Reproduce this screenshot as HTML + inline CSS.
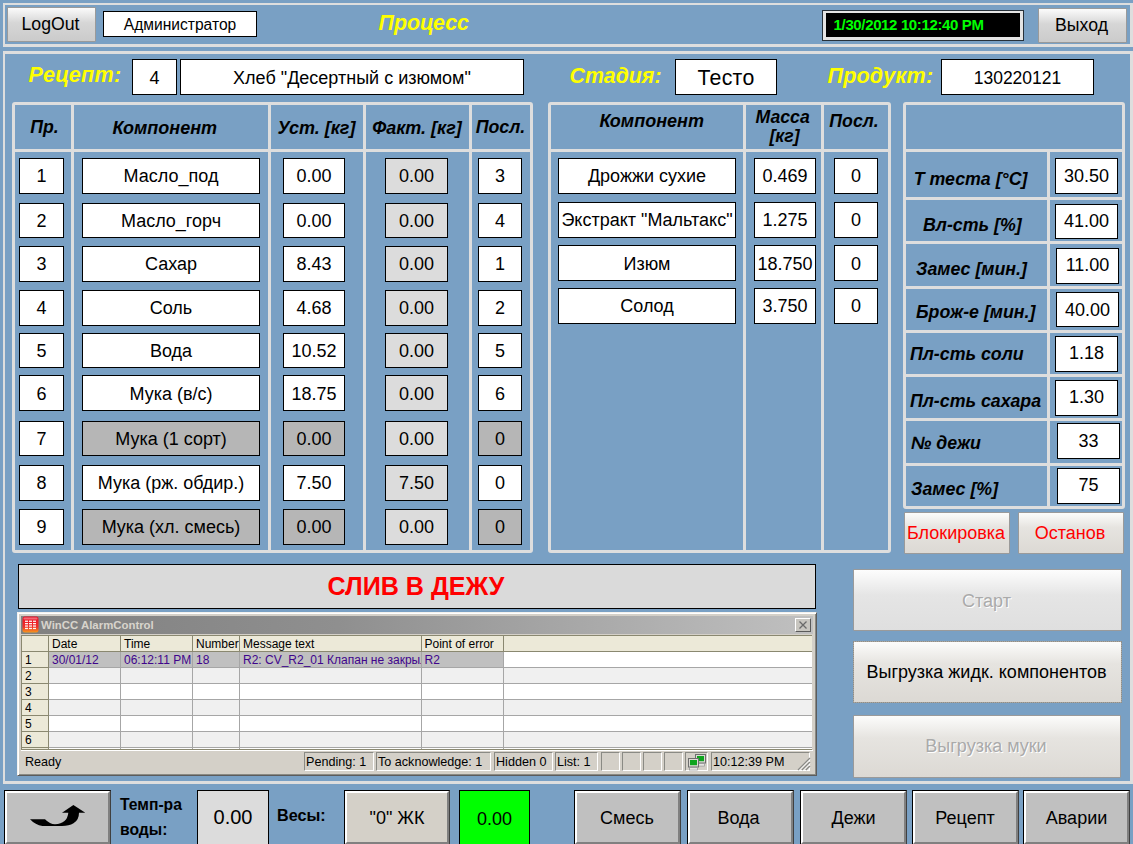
<!DOCTYPE html>
<html><head><meta charset="utf-8"><title>Процесс</title>
<style>
html,body{margin:0;padding:0;}
body{width:1133px;height:844px;overflow:hidden;background:#79a0c4;position:relative;font-family:"Liberation Sans",sans-serif;}
#root{position:absolute;left:0;top:0;width:1133px;height:844px;overflow:hidden;background:#79a0c4;}
.r{position:absolute;}
.t{position:absolute;line-height:1;white-space:pre;color:#000;}
.bx{position:absolute;box-sizing:border-box;border:1px solid #000;text-align:center;white-space:pre;overflow:hidden;}
.gb{position:absolute;box-sizing:border-box;border:1px solid #9a9a9a;text-align:center;white-space:pre;border-radius:1px;text-indent:-2px;}
.gb.dis{text-shadow:1px 1px 0 #fff;}
.cb{position:absolute;box-sizing:border-box;border:1px solid #000;border-right-color:#404040;}
.ah{position:absolute;top:0;height:16px;box-sizing:border-box;border-right:1px solid #8a8870;font-size:12px;line-height:17px;padding-left:3px;white-space:pre;overflow:hidden;color:#000;}
.arh{position:absolute;left:0;width:27px;height:16px;box-sizing:border-box;background:#ece9d8;border-right:1px solid #8a8870;border-bottom:1px solid #8a8870;font-size:12px;line-height:17px;padding-left:3px;color:#000;}
.ac{position:absolute;height:16px;box-sizing:border-box;border-right:1px solid #a6a6a6;border-bottom:1px solid #a6a6a6;font-size:12px;line-height:17px;padding-left:3px;white-space:pre;overflow:hidden;color:#40058c;}
.ap{position:absolute;top:752px;height:19px;box-sizing:border-box;border:1px solid;border-color:#8a8a84 #fff #fff #8a8a84;font-size:12.6px;line-height:18.5px;padding-left:1px;white-space:pre;overflow:hidden;color:#000;}
.cbi{position:absolute;left:0;top:0;right:0;bottom:0;border-left:2px solid #fff;border-top:2px solid #fff;border-right:2px solid #808080;border-bottom:2px solid #808080;text-align:center;white-space:pre;}
</style></head><body><div id="root">
<div class="r" style="left:3px;top:3px;width:1130px;height:44px;box-sizing:border-box;border:solid #dedede;border-width:2px 3px 3px 2px;"></div>
<div class="gb" style="left:7px;top:7px;width:89px;height:35px;line-height:33px;font-size:17.7px;color:#000;background:linear-gradient(#fbfbfb 0%,#d6d6d6 45%,#cbcbcb 100%);">LogOut</div>
<div class="bx" style="left:103px;top:11px;width:154px;height:26px;line-height:26px;background:#fff;font-size:15.6px;color:#000;">Администратор</div>
<div class="t" style="left:378.5px;top:12.58px;font-size:21.4px;font-weight:bold;font-style:italic;color:#ffff00;">Процесс</div>
<div class="r" style="left:822px;top:10px;width:202px;height:31px;box-sizing:border-box;border:1px solid #27313a;background:#e4e4e4;"><div style="position:absolute;left:3px;top:2px;right:3px;bottom:3px;background:#000;"></div></div>
<div class="t" style="left:833.6px;top:17.00px;font-size:15px;font-weight:bold;color:#00ff00;letter-spacing:-0.36px;">1/30/2012 10:12:40 PM</div>
<div class="gb" style="left:1038px;top:8px;width:89px;height:35px;line-height:33px;font-size:17.7px;color:#000;background:linear-gradient(#fbfbfb 0%,#d6d6d6 45%,#cbcbcb 100%);">Выход</div>
<div class="r" style="left:3px;top:51px;width:1130px;height:733px;box-sizing:border-box;border:solid #dedede;border-width:3px 3px 3px 2px;"></div>
<div class="t" style="left:28.5px;top:64.42px;font-size:21.6px;font-weight:bold;font-style:italic;color:#ffff00;letter-spacing:0.3px;">Рецепт:</div>
<div class="bx" style="left:132px;top:59px;width:45px;height:36px;line-height:36px;background:#fff;font-size:18px;color:#000;">4</div>
<div class="bx" style="left:180px;top:59px;width:344px;height:36px;line-height:36px;background:#fff;font-size:18px;color:#000;">Хлеб "Десертный с изюмом"</div>
<div class="t" style="left:569.5px;top:65.87px;font-size:21.3px;font-weight:bold;font-style:italic;color:#ffff00;">Стадия:</div>
<div class="bx" style="left:675px;top:59px;width:102px;height:36px;line-height:36px;background:#fff;font-size:21.3px;color:#000;letter-spacing:0.3px;">Тесто</div>
<div class="t" style="left:827.5px;top:65.32px;font-size:21.6px;font-weight:bold;font-style:italic;color:#ffff00;letter-spacing:0.15px;">Продукт:</div>
<div class="bx" style="left:941px;top:59px;width:153px;height:36px;line-height:36px;background:#fff;font-size:17.5px;color:#000;">130220121</div>
<div class="r" style="left:12px;top:102px;width:521px;height:451px;border:3px solid #dedede;box-sizing:border-box;border-radius:3px;"></div>
<div class="r" style="left:71px;top:104px;width:3px;height:447px;background:#dedede;"></div>
<div class="r" style="left:268px;top:104px;width:3px;height:447px;background:#dedede;"></div>
<div class="r" style="left:363px;top:104px;width:3px;height:447px;background:#dedede;"></div>
<div class="r" style="left:469px;top:104px;width:3px;height:447px;background:#dedede;"></div>
<div class="r" style="left:14px;top:149px;width:517px;height:3px;background:#dedede;"></div>
<div class="t" style="left:-155.5px;width:400px;text-align:center;top:119.42px;font-size:17.7px;font-weight:bold;font-style:italic;">Пр.</div>
<div class="t" style="left:-35.19999999999999px;width:400px;text-align:center;top:119.16px;font-size:18px;font-weight:bold;font-style:italic;">Компонент</div>
<div class="t" style="left:116.5px;width:400px;text-align:center;top:119.16px;font-size:18px;font-weight:bold;font-style:italic;">Уст. [кг]</div>
<div class="t" style="left:217px;width:400px;text-align:center;top:119.16px;font-size:18px;font-weight:bold;font-style:italic;">Факт. [кг]</div>
<div class="t" style="left:300.5px;width:400px;text-align:center;top:119.33px;font-size:17.8px;font-weight:bold;font-style:italic;">Посл.</div>
<div class="bx" style="left:19px;top:158px;width:45px;height:36px;line-height:34px;background:#fff;font-size:18px;color:#000;">1</div>
<div class="bx" style="left:82px;top:158px;width:178px;height:36px;line-height:34px;background:#fff;font-size:18px;color:#000;">Масло_под</div>
<div class="bx" style="left:283px;top:158px;width:62px;height:36px;line-height:34px;background:#fff;font-size:18px;color:#000;">0.00</div>
<div class="bx" style="left:385px;top:158px;width:63px;height:36px;line-height:34px;background:#dcdcdc;font-size:18px;color:#000;">0.00</div>
<div class="bx" style="left:478px;top:158px;width:44px;height:36px;line-height:34px;background:#fff;font-size:18px;color:#000;">3</div>
<div class="bx" style="left:19px;top:203px;width:45px;height:35px;line-height:35px;background:#fff;font-size:18px;color:#000;">2</div>
<div class="bx" style="left:82px;top:203px;width:178px;height:35px;line-height:35px;background:#fff;font-size:18px;color:#000;">Масло_горч</div>
<div class="bx" style="left:283px;top:203px;width:62px;height:35px;line-height:35px;background:#fff;font-size:18px;color:#000;">0.00</div>
<div class="bx" style="left:385px;top:203px;width:63px;height:35px;line-height:35px;background:#dcdcdc;font-size:18px;color:#000;">0.00</div>
<div class="bx" style="left:478px;top:203px;width:44px;height:35px;line-height:35px;background:#fff;font-size:18px;color:#000;">4</div>
<div class="bx" style="left:19px;top:246px;width:45px;height:36px;line-height:34px;background:#fff;font-size:18px;color:#000;">3</div>
<div class="bx" style="left:82px;top:246px;width:178px;height:36px;line-height:34px;background:#fff;font-size:18px;color:#000;">Сахар</div>
<div class="bx" style="left:283px;top:246px;width:62px;height:36px;line-height:34px;background:#fff;font-size:18px;color:#000;">8.43</div>
<div class="bx" style="left:385px;top:246px;width:63px;height:36px;line-height:34px;background:#dcdcdc;font-size:18px;color:#000;">0.00</div>
<div class="bx" style="left:478px;top:246px;width:44px;height:36px;line-height:34px;background:#fff;font-size:18px;color:#000;">1</div>
<div class="bx" style="left:19px;top:290px;width:45px;height:36px;line-height:34px;background:#fff;font-size:18px;color:#000;">4</div>
<div class="bx" style="left:82px;top:290px;width:178px;height:36px;line-height:34px;background:#fff;font-size:18px;color:#000;">Соль</div>
<div class="bx" style="left:283px;top:290px;width:62px;height:36px;line-height:34px;background:#fff;font-size:18px;color:#000;">4.68</div>
<div class="bx" style="left:385px;top:290px;width:63px;height:36px;line-height:34px;background:#dcdcdc;font-size:18px;color:#000;">0.00</div>
<div class="bx" style="left:478px;top:290px;width:44px;height:36px;line-height:34px;background:#fff;font-size:18px;color:#000;">2</div>
<div class="bx" style="left:19px;top:333px;width:45px;height:35px;line-height:35px;background:#fff;font-size:18px;color:#000;">5</div>
<div class="bx" style="left:82px;top:333px;width:178px;height:35px;line-height:35px;background:#fff;font-size:18px;color:#000;">Вода</div>
<div class="bx" style="left:283px;top:333px;width:62px;height:35px;line-height:35px;background:#fff;font-size:18px;color:#000;">10.52</div>
<div class="bx" style="left:385px;top:333px;width:63px;height:35px;line-height:35px;background:#dcdcdc;font-size:18px;color:#000;">0.00</div>
<div class="bx" style="left:478px;top:333px;width:44px;height:35px;line-height:35px;background:#fff;font-size:18px;color:#000;">5</div>
<div class="bx" style="left:19px;top:375px;width:45px;height:36px;line-height:36px;background:#fff;font-size:18px;color:#000;">6</div>
<div class="bx" style="left:82px;top:375px;width:178px;height:36px;line-height:36px;background:#fff;font-size:18px;color:#000;">Мука (в/с)</div>
<div class="bx" style="left:283px;top:375px;width:62px;height:36px;line-height:36px;background:#fff;font-size:18px;color:#000;">18.75</div>
<div class="bx" style="left:385px;top:375px;width:63px;height:36px;line-height:36px;background:#dcdcdc;font-size:18px;color:#000;">0.00</div>
<div class="bx" style="left:478px;top:375px;width:44px;height:36px;line-height:36px;background:#fff;font-size:18px;color:#000;">6</div>
<div class="bx" style="left:19px;top:421px;width:45px;height:35px;line-height:35px;background:#fff;font-size:18px;color:#000;">7</div>
<div class="bx" style="left:82px;top:421px;width:178px;height:35px;line-height:35px;background:#b6b6b6;font-size:18px;color:#000;">Мука (1 сорт)</div>
<div class="bx" style="left:283px;top:421px;width:62px;height:35px;line-height:35px;background:#b6b6b6;font-size:18px;color:#000;">0.00</div>
<div class="bx" style="left:385px;top:421px;width:63px;height:35px;line-height:35px;background:#dcdcdc;font-size:18px;color:#000;">0.00</div>
<div class="bx" style="left:478px;top:421px;width:44px;height:35px;line-height:35px;background:#b6b6b6;font-size:18px;color:#000;">0</div>
<div class="bx" style="left:19px;top:465px;width:45px;height:36px;line-height:34px;background:#fff;font-size:18px;color:#000;">8</div>
<div class="bx" style="left:82px;top:465px;width:178px;height:36px;line-height:34px;background:#fff;font-size:18px;color:#000;">Мука (рж. обдир.)</div>
<div class="bx" style="left:283px;top:465px;width:62px;height:36px;line-height:34px;background:#fff;font-size:18px;color:#000;">7.50</div>
<div class="bx" style="left:385px;top:465px;width:63px;height:36px;line-height:34px;background:#dcdcdc;font-size:18px;color:#000;">7.50</div>
<div class="bx" style="left:478px;top:465px;width:44px;height:36px;line-height:34px;background:#fff;font-size:18px;color:#000;">0</div>
<div class="bx" style="left:19px;top:509px;width:45px;height:36px;line-height:34px;background:#fff;font-size:18px;color:#000;">9</div>
<div class="bx" style="left:82px;top:509px;width:178px;height:36px;line-height:34px;background:#b6b6b6;font-size:18px;color:#000;">Мука (хл. смесь)</div>
<div class="bx" style="left:283px;top:509px;width:62px;height:36px;line-height:34px;background:#b6b6b6;font-size:18px;color:#000;">0.00</div>
<div class="bx" style="left:385px;top:509px;width:63px;height:36px;line-height:34px;background:#dcdcdc;font-size:18px;color:#000;">0.00</div>
<div class="bx" style="left:478px;top:509px;width:44px;height:36px;line-height:34px;background:#b6b6b6;font-size:18px;color:#000;">0</div>
<div class="r" style="left:548px;top:102px;width:343px;height:451px;border:3px solid #dedede;box-sizing:border-box;border-radius:3px;"></div>
<div class="r" style="left:743px;top:104px;width:3px;height:447px;background:#dedede;"></div>
<div class="r" style="left:821px;top:104px;width:3px;height:447px;background:#dedede;"></div>
<div class="r" style="left:550px;top:149px;width:339px;height:3px;background:#dedede;"></div>
<div class="t" style="left:451.70000000000005px;width:400px;text-align:center;top:112.06px;font-size:18px;font-weight:bold;font-style:italic;">Компонент</div>
<div class="t" style="left:582.6px;width:400px;text-align:center;top:109.32px;font-size:17.7px;font-weight:bold;font-style:italic;">Масса</div>
<div class="t" style="left:584.5px;width:400px;text-align:center;top:127.72px;font-size:17.7px;font-weight:bold;font-style:italic;">[кг]</div>
<div class="t" style="left:654px;width:400px;text-align:center;top:112.92px;font-size:17.7px;font-weight:bold;font-style:italic;">Посл.</div>
<div class="bx" style="left:558px;top:158px;width:178px;height:36px;line-height:34px;background:#fff;font-size:18px;color:#000;">Дрожжи сухие</div>
<div class="bx" style="left:754px;top:158px;width:62px;height:36px;line-height:34px;background:#fff;font-size:18px;color:#000;">0.469</div>
<div class="bx" style="left:834px;top:158px;width:44px;height:36px;line-height:34px;background:#fff;font-size:18px;color:#000;">0</div>
<div class="bx" style="left:558px;top:202px;width:178px;height:36px;line-height:34px;background:#fff;font-size:18px;color:#000;">Экстракт "Мальтакс"</div>
<div class="bx" style="left:754px;top:202px;width:62px;height:36px;line-height:34px;background:#fff;font-size:18px;color:#000;">1.275</div>
<div class="bx" style="left:834px;top:202px;width:44px;height:36px;line-height:34px;background:#fff;font-size:18px;color:#000;">0</div>
<div class="bx" style="left:558px;top:245px;width:178px;height:36px;line-height:36px;background:#fff;font-size:18px;color:#000;">Изюм</div>
<div class="bx" style="left:754px;top:245px;width:62px;height:36px;line-height:36px;background:#fff;font-size:18px;color:#000;">18.750</div>
<div class="bx" style="left:834px;top:245px;width:44px;height:36px;line-height:36px;background:#fff;font-size:18px;color:#000;">0</div>
<div class="bx" style="left:558px;top:288px;width:178px;height:36px;line-height:34px;background:#fff;font-size:18px;color:#000;">Солод</div>
<div class="bx" style="left:754px;top:288px;width:62px;height:36px;line-height:34px;background:#fff;font-size:18px;color:#000;">3.750</div>
<div class="bx" style="left:834px;top:288px;width:44px;height:36px;line-height:34px;background:#fff;font-size:18px;color:#000;">0</div>
<div class="r" style="left:903px;top:102px;width:222px;height:407px;border:3px solid #dedede;box-sizing:border-box;border-radius:3px;"></div>
<div class="r" style="left:1047px;top:150px;width:3px;height:357px;background:#dedede;"></div>
<div class="r" style="left:905px;top:149px;width:218px;height:3px;background:#dedede;"></div>
<div class="r" style="left:905px;top:197px;width:218px;height:3px;background:#dedede;"></div>
<div class="r" style="left:905px;top:241px;width:218px;height:3px;background:#dedede;"></div>
<div class="r" style="left:905px;top:286px;width:218px;height:3px;background:#dedede;"></div>
<div class="r" style="left:905px;top:330px;width:218px;height:3px;background:#dedede;"></div>
<div class="r" style="left:905px;top:374px;width:218px;height:3px;background:#dedede;"></div>
<div class="r" style="left:905px;top:418px;width:218px;height:3px;background:#dedede;"></div>
<div class="r" style="left:905px;top:463px;width:218px;height:3px;background:#dedede;"></div>
<div class="t" style="left:913.7px;top:171.23px;font-size:17.8px;font-weight:bold;font-style:italic;">Т теста [°C]</div>
<div class="bx" style="left:1055px;top:158px;width:63px;height:36px;line-height:34px;background:#fff;font-size:18px;color:#000;">30.50</div>
<div class="t" style="left:923px;top:217.23px;font-size:17.8px;font-weight:bold;font-style:italic;">Вл-сть [%]</div>
<div class="bx" style="left:1055px;top:204px;width:63px;height:35px;line-height:33px;background:#fff;font-size:18px;color:#000;">41.00</div>
<div class="t" style="left:916px;top:261.23px;font-size:17.8px;font-weight:bold;font-style:italic;">Замес [мин.]</div>
<div class="bx" style="left:1056px;top:248px;width:63px;height:36px;line-height:33.0px;background:#fff;font-size:18px;color:#000;">11.00</div>
<div class="t" style="left:916px;top:304.23px;font-size:17.8px;font-weight:bold;font-style:italic;">Брож-е [мин.]</div>
<div class="bx" style="left:1056px;top:292px;width:63px;height:35px;line-height:34.0px;background:#fff;font-size:18px;color:#000;">40.00</div>
<div class="t" style="left:910px;top:345.83px;font-size:17.8px;font-weight:bold;font-style:italic;">Пл-сть соли</div>
<div class="bx" style="left:1055px;top:336px;width:63px;height:36px;line-height:32px;background:#fff;font-size:18px;color:#000;">1.18</div>
<div class="t" style="left:910px;top:392.73px;font-size:17.8px;font-weight:bold;font-style:italic;">Пл-сть сахара</div>
<div class="bx" style="left:1055px;top:380px;width:63px;height:36px;line-height:33.0px;background:#fff;font-size:18px;color:#000;">1.30</div>
<div class="t" style="left:911px;top:435.23px;font-size:17.8px;font-weight:bold;font-style:italic;">№ дежи</div>
<div class="bx" style="left:1057px;top:423px;width:63px;height:36px;line-height:34px;background:#fff;font-size:18px;color:#000;">33</div>
<div class="t" style="left:911px;top:480.93px;font-size:17.8px;font-weight:bold;font-style:italic;">Замес [%]</div>
<div class="bx" style="left:1057px;top:468px;width:63px;height:36px;line-height:32px;background:#fff;font-size:18px;color:#000;">75</div>
<div class="gb" style="left:904px;top:512px;width:106px;height:42px;line-height:40px;font-size:18px;color:#ff0000;background:linear-gradient(#fcfcfb 0%,#e6e4e0 36%,#dcd9d4 100%);">Блокировка</div>
<div class="gb" style="left:1018px;top:512px;width:106px;height:42px;line-height:40px;font-size:18px;color:#ff0000;background:linear-gradient(#fcfcfb 0%,#e6e4e0 36%,#dcd9d4 100%);">Останов</div>
<div class="gb dis" style="left:853px;top:569px;width:269px;height:62px;line-height:60px;font-size:18px;color:#aaaaaa;background:linear-gradient(#fdfdfd 0%,#e5e5e5 42%,#dfdfdf 100%);padding-top:1px;">Старт</div>
<div class="gb" style="left:853px;top:641px;width:269px;height:62px;line-height:60px;font-size:18px;color:#000;background:linear-gradient(#fcfcfb 0%,#e6e4e0 36%,#dcd9d4 100%);border:1px solid #a9a7a1;outline:1px dotted #8f8d88;outline-offset:-1px;">Выгрузка жидк. компонентов</div>
<div class="gb dis" style="left:853px;top:715px;width:268px;height:63px;line-height:61px;font-size:18px;color:#aaaaaa;background:linear-gradient(#fcfcfb 0%,#e6e4e0 36%,#dcd9d4 100%);">Выгрузка муки</div>
<div class="bx" style="left:18px;top:564px;width:798px;height:45px;line-height:45px;background:#dadada;font-size:25.1px;color:#ff0000;font-weight:bold;line-height:43.5px;text-indent:-2px;">СЛИВ В ДЕЖУ</div>
<div class="r" style="left:17px;top:612px;width:800px;height:164px;box-sizing:border-box;background:#d4d0c8;border:1px solid;border-color:#f4f2ee #5c5c5c #5c5c5c #f4f2ee;box-shadow:inset 1px 1px 0 #fff, inset -1px -1px 0 #8a8a84;"></div>
<div class="r" style="left:21px;top:616px;width:792px;height:18px;background:linear-gradient(90deg,#808080 0%,#8f8f8f 40%,#c0c0c0 100%);"></div>
<svg class="r" style="left:22px;top:616px" width="17" height="17" viewBox="0 0 17 17"><defs><linearGradient id="ig" x1="0" y1="0" x2="0" y2="1"><stop offset="0" stop-color="#e8132a"/><stop offset="0.65" stop-color="#f0302a"/><stop offset="1" stop-color="#f59a1e"/></linearGradient></defs><rect x="0.5" y="0.5" width="16" height="16" rx="2.2" fill="url(#ig)"/><rect x="1.5" y="1.5" width="14" height="2" rx="1" fill="#f58a96" opacity=".7"/>
<g fill="#fff" opacity=".95"><rect x="3" y="4.6" width="3" height="1.3"/><rect x="7" y="4.6" width="3" height="1.3"/><rect x="11" y="4.6" width="3" height="1.3"/><rect x="3" y="7" width="3" height="1.3"/><rect x="7" y="7" width="3" height="1.3"/><rect x="11" y="7" width="3" height="1.3"/><rect x="3" y="9.4" width="3" height="1.3"/><rect x="7" y="9.4" width="3" height="1.3"/><rect x="11" y="9.4" width="3" height="1.3"/><rect x="3" y="11.8" width="3" height="1.3"/><rect x="7" y="11.8" width="3" height="1.3"/><rect x="11" y="11.8" width="3" height="1.3"/></g></svg>
<div class="t" style="left:41px;top:620.2px;font-size:11.4px;font-weight:bold;color:#d8d4cc;">WinCC AlarmControl</div>
<div class="r" style="left:795px;top:618px;width:16px;height:14px;box-sizing:border-box;background:#c8c6c0;border:1px solid;border-color:#fff #5a5a5a #5a5a5a #fff;"><svg width="14" height="12" viewBox="0 0 14 12" style="position:absolute;left:0;top:0"><path d="M3.5 2.5 L10.5 9.5 M10.5 2.5 L3.5 9.5" stroke="#6a6a6a" stroke-width="1.3" fill="none"/></svg></div>
<div class="r" style="left:21px;top:635px;width:791px;height:115px;background:#fff;overflow:hidden;border-top:1px solid #8a8870;border-left:1px solid #8a8870;box-sizing:border-box;">
<div class="r" style="left:0;top:0;width:791px;height:16px;background:#ece9d8;border-bottom:1px solid #8a8870;box-sizing:border-box;"></div>
<div class="ah" style="left:0px;width:27px;"></div>
<div class="ah" style="left:27px;width:72px;">Date</div>
<div class="ah" style="left:99px;width:72px;">Time</div>
<div class="ah" style="left:171px;width:47px;">Number</div>
<div class="ah" style="left:218px;width:181.5px;">Message text</div>
<div class="ah" style="left:399.5px;width:82.0px;">Point of error</div>
<div class="ah" style="left:481.5px;width:309.5px;"></div>
<div class="arh" style="top:16px;">1</div>
<div class="ac" style="left:27px;top:16px;width:72px;background:#c0c0c0;">30/01/12</div>
<div class="ac" style="left:99px;top:16px;width:72px;background:#c0c0c0;">06:12:11 PM</div>
<div class="ac" style="left:171px;top:16px;width:47px;background:#c0c0c0;">18</div>
<div class="ac" style="left:218px;top:16px;width:181.5px;background:#c0c0c0;">R2: CV_R2_01 Клапан не закрылся</div>
<div class="ac" style="left:399.5px;top:16px;width:82.0px;background:#c0c0c0;">R2</div>
<div class="ac" style="left:481.5px;top:16px;width:309.5px;background:#fff;"></div>
<div class="arh" style="top:32px;">2</div>
<div class="ac" style="left:27px;top:32px;width:72px;background:#f0f0f0;"></div>
<div class="ac" style="left:99px;top:32px;width:72px;background:#f0f0f0;"></div>
<div class="ac" style="left:171px;top:32px;width:47px;background:#f0f0f0;"></div>
<div class="ac" style="left:218px;top:32px;width:181.5px;background:#f0f0f0;"></div>
<div class="ac" style="left:399.5px;top:32px;width:82.0px;background:#f0f0f0;"></div>
<div class="ac" style="left:481.5px;top:32px;width:309.5px;background:#f0f0f0;"></div>
<div class="arh" style="top:48px;">3</div>
<div class="ac" style="left:27px;top:48px;width:72px;background:#fff;"></div>
<div class="ac" style="left:99px;top:48px;width:72px;background:#fff;"></div>
<div class="ac" style="left:171px;top:48px;width:47px;background:#fff;"></div>
<div class="ac" style="left:218px;top:48px;width:181.5px;background:#fff;"></div>
<div class="ac" style="left:399.5px;top:48px;width:82.0px;background:#fff;"></div>
<div class="ac" style="left:481.5px;top:48px;width:309.5px;background:#fff;"></div>
<div class="arh" style="top:64px;">4</div>
<div class="ac" style="left:27px;top:64px;width:72px;background:#f0f0f0;"></div>
<div class="ac" style="left:99px;top:64px;width:72px;background:#f0f0f0;"></div>
<div class="ac" style="left:171px;top:64px;width:47px;background:#f0f0f0;"></div>
<div class="ac" style="left:218px;top:64px;width:181.5px;background:#f0f0f0;"></div>
<div class="ac" style="left:399.5px;top:64px;width:82.0px;background:#f0f0f0;"></div>
<div class="ac" style="left:481.5px;top:64px;width:309.5px;background:#f0f0f0;"></div>
<div class="arh" style="top:80px;">5</div>
<div class="ac" style="left:27px;top:80px;width:72px;background:#fff;"></div>
<div class="ac" style="left:99px;top:80px;width:72px;background:#fff;"></div>
<div class="ac" style="left:171px;top:80px;width:47px;background:#fff;"></div>
<div class="ac" style="left:218px;top:80px;width:181.5px;background:#fff;"></div>
<div class="ac" style="left:399.5px;top:80px;width:82.0px;background:#fff;"></div>
<div class="ac" style="left:481.5px;top:80px;width:309.5px;background:#fff;"></div>
<div class="arh" style="top:96px;">6</div>
<div class="ac" style="left:27px;top:96px;width:72px;background:#f0f0f0;"></div>
<div class="ac" style="left:99px;top:96px;width:72px;background:#f0f0f0;"></div>
<div class="ac" style="left:171px;top:96px;width:47px;background:#f0f0f0;"></div>
<div class="ac" style="left:218px;top:96px;width:181.5px;background:#f0f0f0;"></div>
<div class="ac" style="left:399.5px;top:96px;width:82.0px;background:#f0f0f0;"></div>
<div class="ac" style="left:481.5px;top:96px;width:309.5px;background:#f0f0f0;"></div>
<div class="arh" style="top:112px;">7</div>
<div class="ac" style="left:27px;top:112px;width:72px;background:#fff;"></div>
<div class="ac" style="left:99px;top:112px;width:72px;background:#fff;"></div>
<div class="ac" style="left:171px;top:112px;width:47px;background:#fff;"></div>
<div class="ac" style="left:218px;top:112px;width:181.5px;background:#fff;"></div>
<div class="ac" style="left:399.5px;top:112px;width:82.0px;background:#fff;"></div>
<div class="ac" style="left:481.5px;top:112px;width:309.5px;background:#fff;"></div>
</div>
<div class="r" style="left:21px;top:749px;width:791px;height:1px;background:#8a8870;"></div>
<div class="r" style="left:21px;top:750px;width:792px;height:22px;background:#d4d0c8;border-top:1px solid #fff;box-sizing:border-box;"></div>
<div class="t" style="left:25px;top:756px;font-size:12.6px;">Ready</div>
<div class="ap" style="left:304px;width:70px;">Pending: 1</div>
<div class="ap" style="left:376px;width:115px;">To acknowledge: 1</div>
<div class="ap" style="left:494px;width:59px;">Hidden 0</div>
<div class="ap" style="left:555px;width:43px;">List: 1</div>
<div class="ap" style="left:601px;width:19px;"></div>
<div class="ap" style="left:622px;width:19px;"></div>
<div class="ap" style="left:643px;width:19px;"></div>
<div class="ap" style="left:664px;width:19px;"></div>
<div class="ap" style="left:685px;width:23px;"></div>
<div class="ap" style="left:711px;width:99px;">10:12:39 PM</div>
<svg class="r" style="left:687px;top:752.5px" width="20" height="18" viewBox="0 0 20 18"><rect x="8.5" y="1.5" width="10" height="8.5" fill="#dcdad4" stroke="#6e6e6e" stroke-width="1"/><rect x="10" y="3" width="7" height="5.2" fill="#0ea41e"/><rect x="9.5" y="10.8" width="8" height="2.2" fill="#f6f6f2" stroke="#8e8e8e" stroke-width=".7"/><rect x="1.5" y="5.5" width="10" height="8.5" fill="#dcdad4" stroke="#6e6e6e" stroke-width="1"/><rect x="3" y="7" width="7" height="5.2" fill="#0ea41e"/><rect x="2.5" y="14.8" width="8" height="2.2" fill="#f6f6f2" stroke="#8e8e8e" stroke-width=".7"/></svg>
<svg class="r" style="left:797px;top:757px" width="14" height="14" viewBox="0 0 14 14"><g stroke-width="1.3"><path d="M13 2.2 L2.2 13 M13 6.2 L6.2 13 M13 10.2 L10.2 13" stroke="#fff"/><path d="M13 1 L1 13 M13 5 L5 13 M13 9 L9 13" stroke="#8a8a86"/></g></svg>
<div class="cb" style="left:4px;top:790px;width:107px;height:55px;background:#c0c0c0;"><div class="cbi"></div><svg width="107" height="60" style="position:absolute;left:-1px;top:-1px" viewBox="4 790 107 60"><path d="M73.4 804.9 L85.3 812.7 L79 812.7 Q79 820 73.5 823.3 Q69 825.9 62 825.9 L42.4 825.9 Q35.5 825 30 819.2 L45 819.2 Q50 824.2 55 824.2 Q67.3 823.5 68.3 812.7 L62 812.7 Z" fill="#000"/></svg></div>
<div class="t" style="left:120px;top:796.81px;font-size:15.7px;font-weight:bold;">Темп-ра</div>
<div class="t" style="left:120px;top:822.41px;font-size:15.7px;font-weight:bold;">воды:</div>
<div class="bx" style="left:197px;top:790px;width:72px;height:70px;line-height:70px;background:#dcdcdc;font-size:20px;color:#000;line-height:53px;">0.00</div>
<div class="t" style="left:277px;top:807.49px;font-size:16.2px;font-weight:bold;">Весы:</div>
<div class="cb" style="left:344px;top:790px;width:106px;height:55px;background:#d4d0c8;font-size:18px;"><div class="cbi" style="line-height:50px;text-indent:0px">"0" ЖК</div></div>
<div class="bx" style="left:459px;top:790px;width:71px;height:70px;line-height:70px;background:#00ff00;font-size:18px;color:#000;line-height:56px;">0.00</div>
<div class="cb" style="left:574px;top:790px;width:107px;height:55px;background:#c0c0c0;font-size:18px;"><div class="cbi" style="line-height:50px;text-indent:-1px">Смесь</div></div>
<div class="cb" style="left:687px;top:790px;width:107px;height:55px;background:#c0c0c0;font-size:18px;"><div class="cbi" style="line-height:50px;text-indent:-4px">Вода</div></div>
<div class="cb" style="left:800px;top:790px;width:107px;height:55px;background:#c0c0c0;font-size:18px;"><div class="cbi" style="line-height:50px;text-indent:0px">Дежи</div></div>
<div class="cb" style="left:912px;top:790px;width:107px;height:55px;background:#c0c0c0;font-size:18px;"><div class="cbi" style="line-height:50px;text-indent:-1px">Рецепт</div></div>
<div class="cb" style="left:1023px;top:790px;width:107px;height:55px;background:#c0c0c0;font-size:18px;"><div class="cbi" style="line-height:50px;text-indent:0px">Аварии</div></div>
</div></body></html>
